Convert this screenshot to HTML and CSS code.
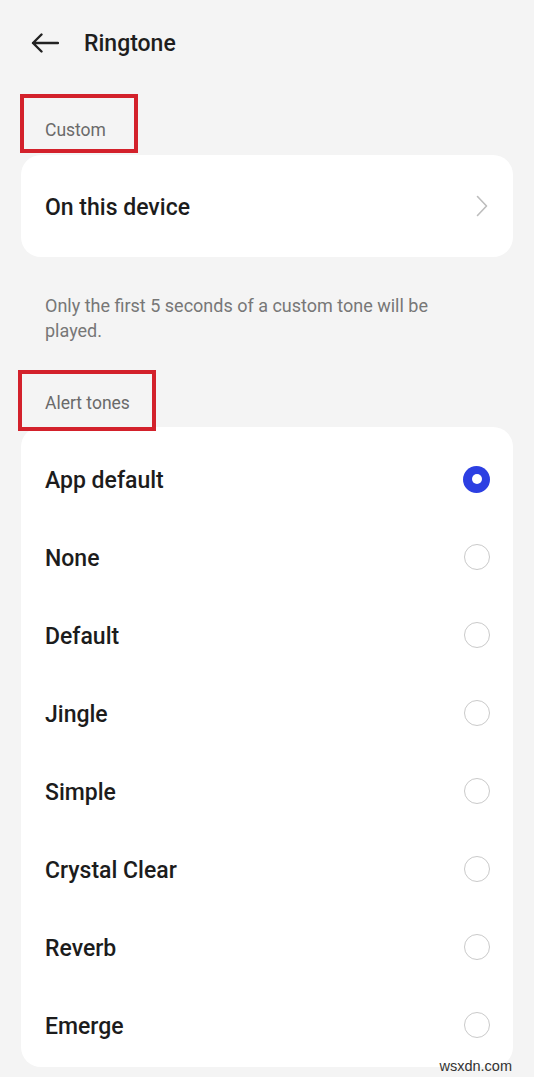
FILE: index.html
```
<!DOCTYPE html>
<html>
<head>
<meta charset="utf-8">
<link rel="stylesheet" href="styles.css">
</head>
<body>
<div class="screen">
  <header class="topbar">
    <svg class="back" width="28" height="20" viewBox="0 0 28 20"><path d="M27 10H2M10.5 1.5L2 10l8.5 8.5" fill="none" stroke="#222" stroke-width="2.4" stroke-linecap="round" stroke-linejoin="round"/></svg>
    <h1 class="title">Ringtone</h1>
  </header>

  <div class="section-head first">
    <span>Custom</span>
    <div class="mark mark-1"></div>
  </div>
  <div class="card link-card">
    <span class="label">On this device</span>
    <svg class="chev" width="12" height="22" viewBox="0 0 12 22"><path d="M1.5 1.5L10.5 11 1.5 20.5" fill="none" stroke="#bdbdbd" stroke-width="1.6" stroke-linecap="round" stroke-linejoin="round"/></svg>
  </div>

  <p class="note">Only the first 5 seconds of a custom tone will be played.</p>

  <div class="section-head second">
    <span>Alert tones</span>
    <div class="mark mark-2"></div>
  </div>
  <div class="card list">
    <div class="row"><span class="label">App default</span><span class="radio on"></span></div>
    <div class="row"><span class="label">None</span><span class="radio"></span></div>
    <div class="row"><span class="label">Default</span><span class="radio"></span></div>
    <div class="row"><span class="label">Jingle</span><span class="radio"></span></div>
    <div class="row"><span class="label">Simple</span><span class="radio"></span></div>
    <div class="row"><span class="label">Crystal Clear</span><span class="radio"></span></div>
    <div class="row"><span class="label">Reverb</span><span class="radio"></span></div>
    <div class="row"><span class="label">Emerge</span><span class="radio"></span></div>
  </div>
  <div class="watermark">wsxdn.com</div>
</div>
</body>
</html>
```
FILE: styles.css
```
* { box-sizing: border-box; }
html, body { margin: 0; padding: 0; }
body {
  background: #f4f4f4;
  font-family: Roboto, "Noto Sans", sans-serif;
  color: #1c1c1c;
  width: 534px;
  height: 1077px;
  overflow: hidden;
}
.screen { position: relative; height: 1077px; }

.topbar {
  height: 86px;
  display: flex;
  align-items: center;
  padding-left: 31px;
}
.back { display: block; margin-right: 25px; }
.title {
  margin: 0;
  font-size: 23px;
  font-weight: 500;
  color: #1e1e1e;
  line-height: 28px;
  padding-top: 2px;
}

.section-head {
  position: relative;
  padding-left: 45px;
  font-size: 17.5px;
  line-height: 20px;
  color: #6a6a6a;
}
.section-head.first { padding-top: 34px; padding-bottom: 15px; }
.section-head.second { padding-top: 50px; padding-bottom: 14px; }

.mark {
  position: absolute;
  border: 4px solid #d3212b;
  z-index: 2;
}
.mark-1 { left: 20px; top: 8px; width: 118px; height: 59px; }
.mark-2 { left: 18px; top: 27px; width: 138px; height: 61px; }

.card {
  background: #fff;
  margin: 0 21px;
  border-radius: 20px;
}
.link-card {
  height: 102px;
  display: flex;
  align-items: center;
  justify-content: space-between;
  padding: 0 25px 0 24px;
}
.label {
  font-size: 23px;
  font-weight: 500;
  color: #1c1c1c;
  line-height: 28px;
  padding-top: 4px;
}
.chev { display: block; }

.note {
  margin: 0;
  padding: 36px 45px 0 45px;
  font-size: 18px;
  line-height: 25px;
  color: #777;
}

.list { padding: 13px 0 3px; }
.row {
  height: 78px;
  display: flex;
  align-items: center;
  justify-content: space-between;
  padding: 0 23px 0 24px;
}
.radio {
  width: 26px;
  height: 26px;
  border-radius: 50%;
  border: 1.5px solid #cacaca;
  display: flex;
  align-items: center;
  justify-content: center;
}
.radio.on {
  border: none;
  background: #2c3fe2;
  width: 27px;
  height: 27px;
}
.radio.on::after {
  content: "";
  width: 10px;
  height: 10px;
  border-radius: 50%;
  background: #fff;
}

.watermark {
  position: absolute;
  right: 22px;
  top: 1058px;
  font-family: "Liberation Sans", Arial, sans-serif;
  font-size: 14.5px;
  color: #333;
}
```
